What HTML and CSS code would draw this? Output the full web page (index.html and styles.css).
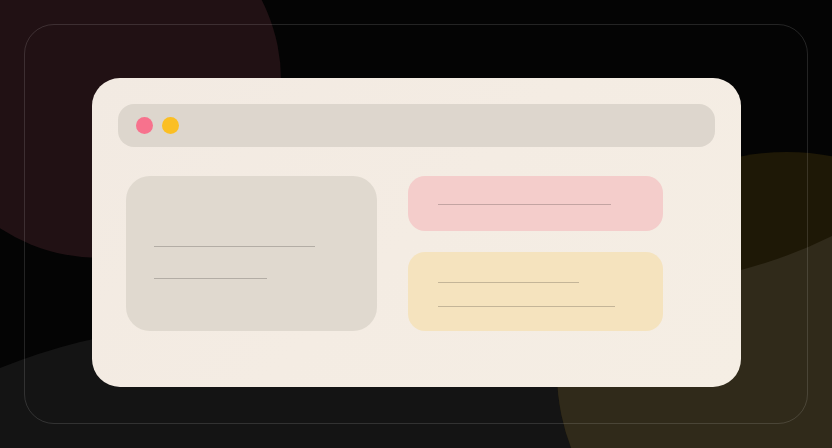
FILE: index.html
```html
<!DOCTYPE html>
<html lang="en">
<head>
<meta charset="utf-8">
<title>Window mockup</title>
<link rel="stylesheet" href="styles.css">
</head>
<body>
<svg class="backdrop" width="832" height="448" viewBox="0 0 832 448" aria-hidden="true">
  <defs>
    <clipPath id="grayClip">
      <path d="M0,368 Q40,352 80,342 C300,292 600,300 741,270 Q790,257 832,236 V448 H0 Z"/>
    </clipPath>
  </defs>
  <ellipse cx="100" cy="80" rx="181" ry="178" fill="#211114"/>
  <path d="M0,368 Q40,352 80,342 C300,292 600,300 741,270 Q790,257 832,236 V448 H0 Z" fill="#141414"/>
  <ellipse cx="787" cy="372" rx="230" ry="220" fill="#1e1806"/>
  <ellipse cx="787" cy="372" rx="230" ry="220" fill="#302a1a" clip-path="url(#grayClip)"/>
</svg>
<div class="frame">
  <div class="card">
    <div class="titlebar">
      <span class="dot dot-pink"></span>
      <span class="dot dot-yellow"></span>
    </div>
    <div class="content">
      <div class="panel panel-main">
        <div class="line" style="width:161px"></div>
        <div class="line" style="width:113px"></div>
      </div>
      <div class="side">
        <div class="panel panel-pink">
          <div class="line" style="width:173px"></div>
        </div>
        <div class="panel panel-yellow">
          <div class="line" style="width:141px"></div>
          <div class="line" style="width:177px"></div>
        </div>
      </div>
    </div>
  </div>
</div>
</body>
</html>
```
FILE: styles.css
```css
html, body {
  margin: 0;
  padding: 0;
}
body {
  width: 832px;
  height: 448px;
  overflow: hidden;
  background: #040404;
  position: relative;
  font-family: "Inter", "Liberation Sans", sans-serif;
}
.backdrop {
  position: absolute;
  left: 0;
  top: 0;
  z-index: 0;
  display: block;
}
.frame {
  position: relative;
  z-index: 1;
  box-sizing: border-box;
  width: 784px;
  height: 400px;
  margin: 24px;
  border: 1px solid rgba(255, 255, 255, 0.13);
  border-radius: 30px;
  padding: 53px 0 0 67px;
  display: flex;
  align-items: flex-start;
}
.card {
  box-sizing: border-box;
  width: 649px;
  height: 309px;
  border-radius: 28px;
  background: linear-gradient(135deg, #f2eae2 0%, #f4ece3 50%, #f5eee4 100%);
  padding: 26px 26px 0;
  display: flex;
  flex-direction: column;
}
.titlebar {
  height: 43px;
  border-radius: 16px;
  background: #ddd6cd;
  display: flex;
  align-items: center;
  gap: 9px;
  padding-left: 18px;
}
.dot {
  width: 17px;
  height: 17px;
  border-radius: 50%;
  display: block;
}
.dot-pink { background: #f7728d; }
.dot-yellow { background: #fbbf24; }
.content {
  margin-top: 29px;
  padding-left: 8px;
  display: flex;
  gap: 31px;
}
.panel {
  box-sizing: border-box;
  display: flex;
  flex-direction: column;
}
.panel-main {
  width: 251px;
  height: 155px;
  border-radius: 24px;
  background: #e0d9cf;
  padding: 70px 0 0 28px;
  gap: 31px;
}
.side {
  width: 255px;
  display: flex;
  flex-direction: column;
  gap: 21px;
}
.panel-pink {
  height: 55px;
  border-radius: 17px;
  background: #f4cdcb;
  padding: 28px 0 0 30px;
}
.panel-yellow {
  height: 79px;
  border-radius: 17px;
  background: #f5e3be;
  padding: 30px 0 0 30px;
  gap: 23px;
}
.line {
  height: 1px;
  background: rgba(0, 0, 0, 0.2);
}
```
